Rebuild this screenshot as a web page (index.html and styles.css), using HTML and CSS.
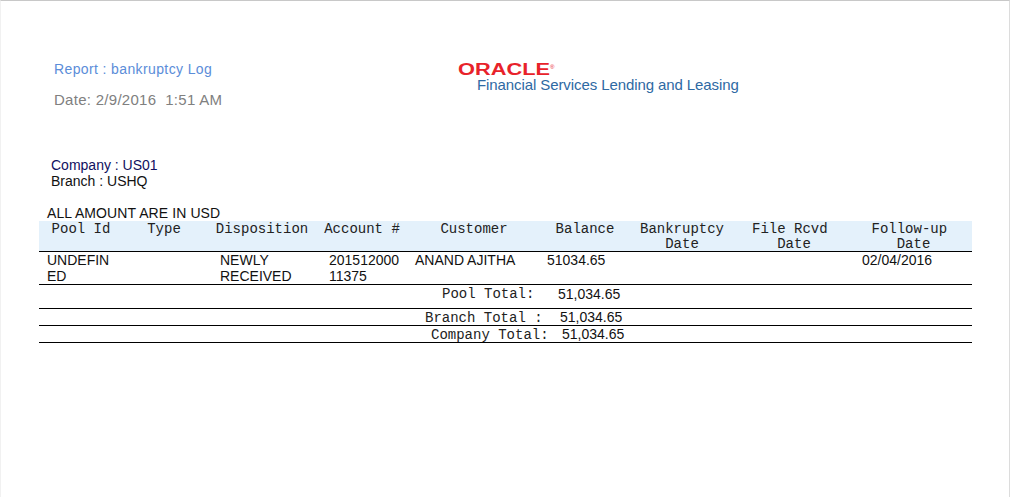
FILE: index.html
```html
<!DOCTYPE html>
<html lang="en">
<head>
<meta charset="utf-8">
<title>Report : bankruptcy Log</title>
<link rel="stylesheet" href="styles.css">
</head>
<body>
<main class="page">
  <header class="top">
    <div class="titles">
      <div class="report">Report : bankruptcy Log</div>
      <div class="date">Date: 2/9/2016&nbsp; 1:51 AM</div>
    </div>
    <div class="brand">
      <svg class="oracle" width="110" height="16" viewBox="0 0 110 16"><text x="0" y="13" textLength="92" lengthAdjust="spacingAndGlyphs" class="oracle-text">ORACLE</text><text x="92" y="7" class="oracle-mark">®</text></svg>
      <div class="product">Financial Services Lending and Leasing</div>
    </div>
  </header>
  <section class="org">
    <div class="company">Company : US01</div>
    <div>Branch : USHQ</div>
  </section>
  <div class="note">ALL AMOUNT ARE IN USD</div>
  <section class="table">
    <div class="row head">
      <div>Pool Id</div>
      <div>Type</div>
      <div>Disposition</div>
      <div>Account #</div>
      <div>Customer</div>
      <div>Balance</div>
      <div>Bankruptcy<br>Date</div>
      <div>File Rcvd&nbsp;<br>Date</div>
      <div class="h-follow">Follow-up&nbsp;<br>Date</div>
    </div>
    <div class="row data">
      <div class="c-pool">UNDEFINED</div>
      <div></div>
      <div class="c-disp">NEWLY RECEIVED</div>
      <div class="c-acct">20151200011375</div>
      <div class="c-cust">ANAND AJITHA</div>
      <div class="c-bal">51034.65</div>
      <div></div>
      <div></div>
      <div class="c-follow">02/04/2016</div>
    </div>
    <div class="total pool"><span class="label">Pool Total:</span><span class="value">51,034.65</span></div>
    <div class="total branch"><span class="label">Branch Total :</span><span class="value">51,034.65</span></div>
    <div class="total comp"><span class="label">Company Total:</span><span class="value">51,034.65</span></div>
  </section>
</main>
</body>
</html>
```
FILE: styles.css
```css
* { box-sizing: border-box; }
html, body { margin: 0; padding: 0; background: #fff; }
body { font-family: "Liberation Sans", Arial, sans-serif; font-size: 14px; color: #111; }
.page {
  width: 1010px;
  height: 497px;
  overflow: hidden;
  border-top: 1px solid #c8c8c8;
  border-right: 1px solid #dcdcdc;
  border-left: 1px solid #f1f1f1;
  padding-top: 60px;
}
.top { display: flex; height: 96px; }
.titles { width: 457px; padding-left: 53px; }
.report { color: #5b8dd9; font-size: 14px; line-height: 16px; letter-spacing: 0.38px; }
.date { color: #808080; font-size: 15px; line-height: 17px; margin-top: 14px; letter-spacing: 0.28px; }
.brand { display: flex; flex-direction: column; padding-top: 1px; }
.oracle { display: block; }
.oracle-text { font-family: "Liberation Sans", Arial, sans-serif; font-size: 16px; font-weight: 700; fill: #e8222a; }
.oracle-mark { font-family: "Liberation Sans", Arial, sans-serif; font-size: 6px; fill: #e8222a; }
.product { color: #2e69a3; font-size: 15px; line-height: 17px; margin-left: 19px; margin-top: -2px; letter-spacing: -0.09px; }
.org { padding-left: 50px; line-height: 16px; }
.company { color: #101060; }
.note { padding-left: 46px; margin-top: 17px; line-height: 15px; height: 15px; letter-spacing: 0.1px; }
.table { margin-left: 38px; width: 933px; }
.row { display: grid; grid-template-columns: 84px 82px 114px 86px 138px 84px 110px 114px 121px; }
.head {
  height: 31px;
  padding-top: 1px;
  background: #e4f1fb;
  border-bottom: 1px solid #000;
  font-family: "Liberation Mono", "Courier New", monospace;
  line-height: 15px;
  text-align: center;
  color: #222;
}
.h-follow { padding-left: 4px; }
.data { height: 33px; line-height: 16px; border-bottom: 1px solid #000; }
.c-pool { padding-left: 8px; padding-right: 10px; word-break: break-all; }
.c-disp { padding-left: 15px; padding-right: 20px; }
.c-acct { padding-left: 10px; padding-right: 2px; word-break: break-all; }
.c-cust { padding-left: 10px; }
.c-bal { padding-left: 4px; }
.c-follow { padding-left: 11px; }
.total { display: flex; border-bottom: 1px solid #000; }
.label { font-family: "Liberation Mono", "Courier New", monospace; font-size: 14px; line-height: 17px; white-space: pre; color: #222; }
.pool { height: 24px; padding-top: 1px; line-height: 17px; }
.branch, .comp { height: 17px; line-height: 16px; }
.branch .label, .comp .label { line-height: 15px; padding-top: 2px; }
.pool .label { margin-left: 403px; width: 116px; }
.branch .label { margin-left: 386px; width: 135px; }
.comp .label { margin-left: 392px; width: 131px; }
```
